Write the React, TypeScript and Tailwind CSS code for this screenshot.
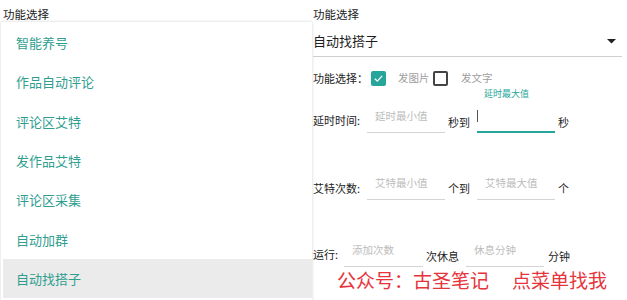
const font = "font-['Noto_Sans_CJK_SC','Noto_Sans',sans-serif]";

const items = ["智能养号", "作品自动评论", "评论区艾特", "发作品艾特", "评论区采集", "自动加群", "自动找搭子"];

function Field({
  width,
  placeholder,
  active,
  hint,
}: {
  width: string;
  placeholder?: string;
  active?: boolean;
  hint?: string;
}) {
  return (
    <div
      className={`relative flex h-[30px] shrink-0 items-center pb-[3px] pl-[8px] ${width} ${
        active ? "border-b-2 border-[#26a69a]" : "border-b border-[#d4d4d4]"
      }`}
    >
      {hint ? (
        <span className="absolute left-[7px] top-[-14px] text-[9px] leading-[10px] text-[#26a69a]">
          {hint}
        </span>
      ) : null}
      {active ? (
        <span className="absolute left-0 top-[7px] h-[12px] w-px bg-[#555]" />
      ) : null}
      {placeholder ? (
        <span className="text-[10.5px] leading-[14px] text-[#bcbcbc]">{placeholder}</span>
      ) : null}
    </div>
  );
}

function Label({ children, className = "" }: { children: string; className?: string }) {
  return (
    <span className={`shrink-0 pt-[4px] text-[11px] leading-[14px] text-[#222] ${className}`}>
      {children}
    </span>
  );
}

export default function App() {
  return (
    <div className={`relative flex h-[300px] w-[627px] overflow-hidden bg-white ${font}`}>
      {/* left: popup list */}
      <div className="flex w-[313px] shrink-0 flex-col">
        <div className="h-[22px] pl-[3px] pt-[7px] text-[11.5px] leading-[14px] text-[#222]">功能选择</div>
        <div className="ml-[1px] mr-[1px] flex flex-1 flex-col bg-white pl-[2px] pt-[1px] shadow-[0_0_3px_rgba(0,0,0,0.18)]">
          {items.map((it, i) => (
            <div
              key={it}
              className={`flex h-[39.33px] shrink-0 items-center pl-[13px] text-[13px] text-[#2f9e8f] ${
                i === items.length - 1 ? "bg-[#ebebeb]" : ""
              }`}
            >
              {it}
            </div>
          ))}
        </div>
      </div>

      {/* right: form */}
      <div className="flex flex-1 flex-col pr-[5px]">
        <div className="h-[22px] pt-[7px] text-[11.5px] leading-[14px] text-[#222]">功能选择</div>
        <div className="flex h-[35px] items-center justify-between border-b border-[#cfcfcf] pt-[4px]">
          <span className="text-[13px] leading-[18px] text-[#1e1e1e]">自动找搭子</span>
          <svg width="9" height="5" viewBox="0 0 9 5" className="mr-[6px]">
            <path d="M0 0 L9 0 L4.5 4.5 Z" fill="#222" />
          </svg>
        </div>

        <div className="mt-[6px] flex h-[30px] items-center">
          <span className="w-[58px] shrink-0 text-[11px] leading-[14px] text-[#222]">功能选择：</span>
          <span className="flex h-[15px] w-[15px] items-center justify-center rounded-[2px] bg-[#26a69a]">
            <svg width="13" height="13" viewBox="0 0 16 16">
              <polyline points="3.5,8.2 6.6,11.2 12.5,4.8" fill="none" stroke="white" strokeWidth="1.6" />
            </svg>
          </span>
          <span className="ml-[12px] w-[35px] text-[10.5px] leading-[14px] text-[#9e9e9e]">发图片</span>
          <span className="h-[15px] w-[15px] rounded-[2px] border-2 border-[#444]" />
          <span className="ml-[13px] text-[10.5px] leading-[14px] text-[#9e9e9e]">发文字</span>
        </div>

        <div className="mt-[10px] flex items-center">
          <Label className="w-[54px]">延时时间:</Label>
          <Field width="w-[78px]" placeholder="延时最小值" />
          <Label className="w-[32px] pl-[3px] pt-[7px]">秒到</Label>
          <Field width="w-[78px]" active hint="延时最大值" />
          <Label className="pl-[3px] pt-[7px]">秒</Label>
        </div>

        <div className="mt-[37px] flex items-center">
          <Label className="w-[54px] pt-[6px]">艾特次数:</Label>
          <Field width="w-[78px]" placeholder="艾特最小值" />
          <Label className="w-[32px] pl-[3px] pt-[6px]">个到</Label>
          <Field width="w-[78px]" placeholder="艾特最大值" />
          <Label className="pl-[3px] pt-[6px]">个</Label>
        </div>

        <div className="mt-[37px] flex items-center">
          <Label className="w-[31px]">运行:</Label>
          <Field width="w-[79px]" placeholder="添加次数" />
          <Label className="w-[43px] pl-[3px] pt-[8px]">次休息</Label>
          <Field width="w-[78px]" placeholder="休息分钟" />
          <Label className="pl-[4px] pt-[8px]">分钟</Label>
        </div>
      </div>

      {/* watermark */}
      <div className="absolute left-[337px] top-[269px] flex text-[19px] leading-[22px] text-[#e5343b]">
        <span>公众号：古圣笔记</span>
        <span className="ml-[23px]">点菜单找我</span>
      </div>
    </div>
  );
}
